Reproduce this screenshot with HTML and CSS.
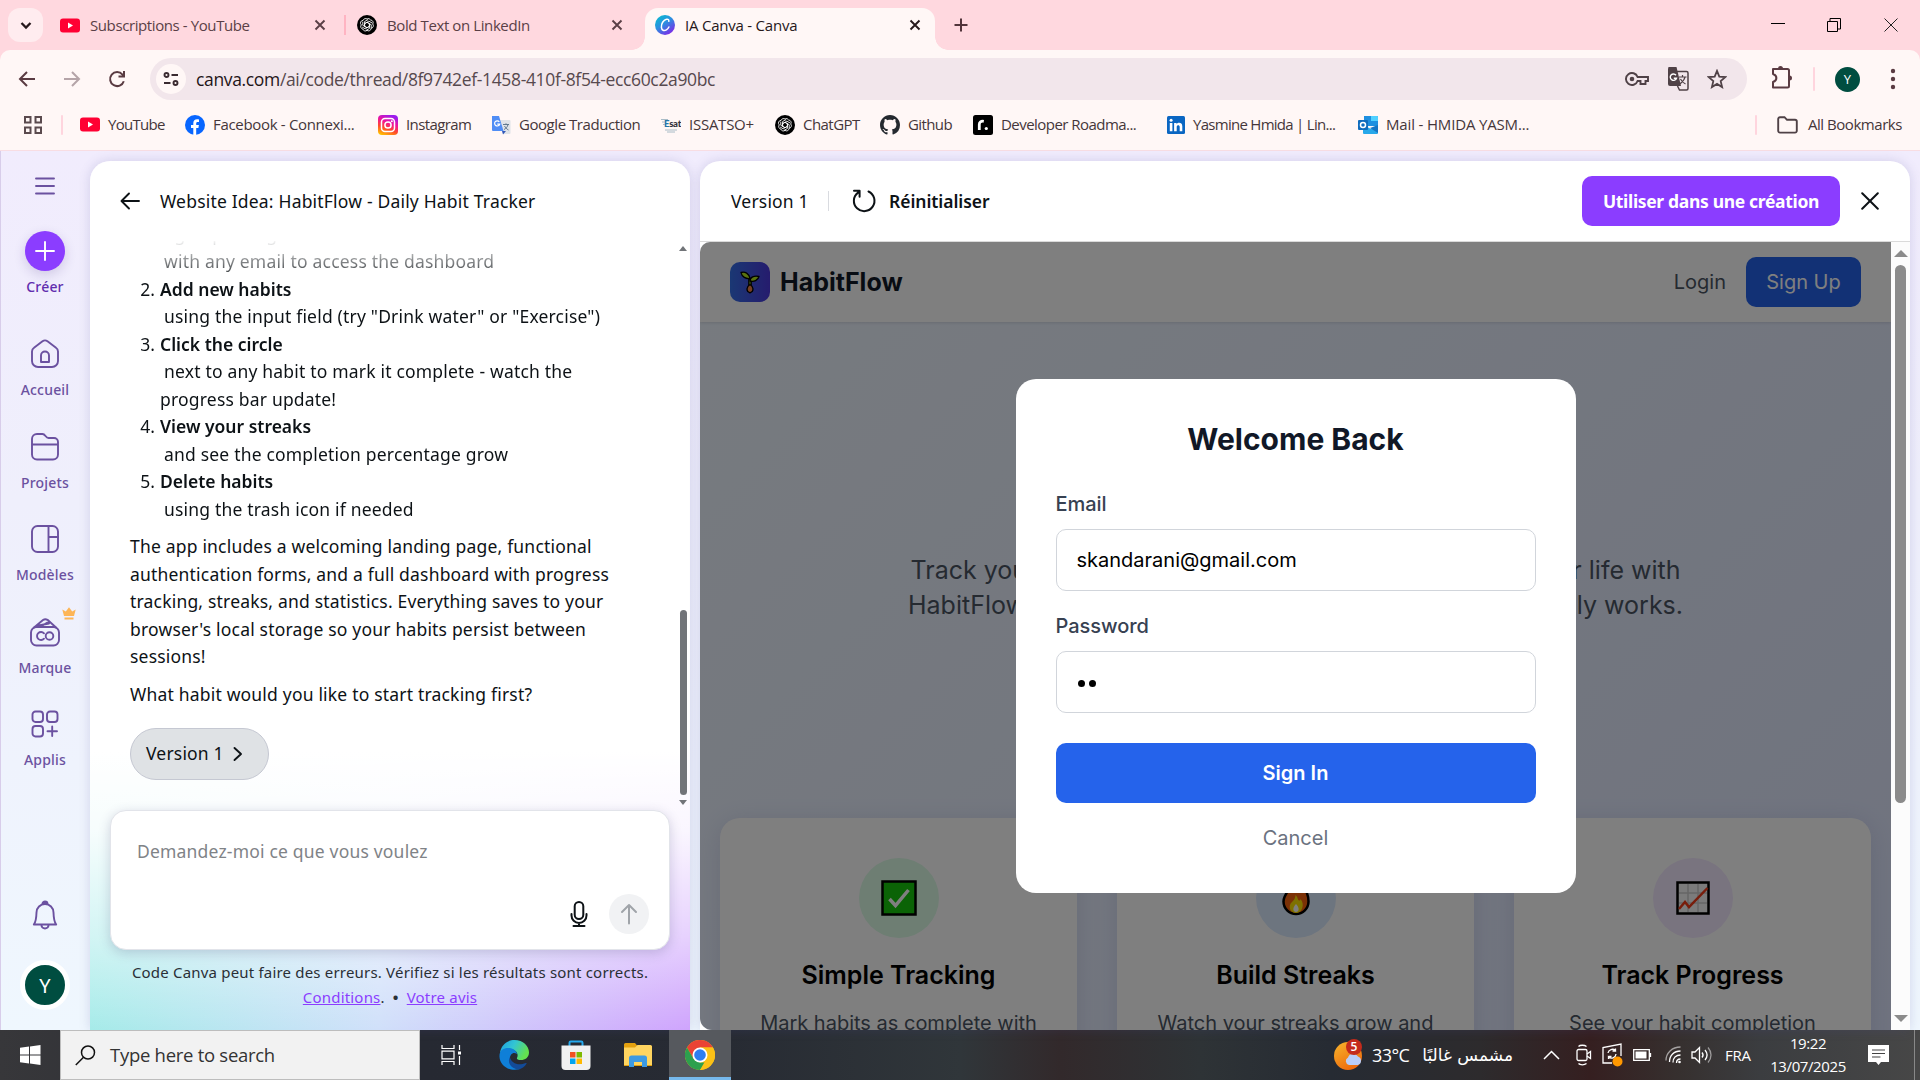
FILE: index.html
```html
<!DOCTYPE html>
<html lang="fr">
<head>
<meta charset="utf-8">
<title>IA Canva - Canva</title>
<link rel="stylesheet" href="styles.css">
</head>
<body>
<svg width="0" height="0" class="defs">
  <defs>
    <linearGradient id="gCanva" x1="0" y1="0" x2=".7" y2="1"><stop offset="0" stop-color="#00c4cc"/><stop offset=".5" stop-color="#2c8fe0"/><stop offset="1" stop-color="#7d2ae8"/></linearGradient>
    <linearGradient id="gInsta" x1=".2" y1="1" x2=".6" y2="0"><stop offset="0" stop-color="#ffc400"/><stop offset=".35" stop-color="#ff4b2b"/><stop offset=".65" stop-color="#f0149a"/><stop offset="1" stop-color="#9a1cf0"/></linearGradient>
    <linearGradient id="gEdge" x1="0" y1="0" x2="1" y2=".4"><stop offset="0" stop-color="#1b9de2"/><stop offset=".5" stop-color="#33c5d3"/><stop offset="1" stop-color="#63e04f"/></linearGradient>
    <linearGradient id="gSun" x1="0" y1="0" x2=".6" y2="1"><stop offset="0" stop-color="#f7b52c"/><stop offset="1" stop-color="#ee6a0c"/></linearGradient>
    <symbol id="yt" viewBox="0 0 20 14"><rect width="20" height="14" rx="3" fill="#ff0033"/><path d="M8 4l5 3-5 3z" fill="#fff"/></symbol>
    <symbol id="gpt" viewBox="0 0 20 20"><circle cx="10" cy="10" r="10" fill="#000"/><g fill="none" stroke="#fff" stroke-width=".9"><path d="M10 4a2.600 2.600 0 0 1 3.600 1 2.600 2.600 0 0 1 2.100 4 2.600 2.600 0 0 1-1.600 4.300 2.600 2.600 0 0 1-4.100 2.100 2.600 2.600 0 0 1-4.100-1.300 2.600 2.600 0 0 1-1.600-4.200A2.600 2.600 0 0 1 6.100 5.400 2.600 2.600 0 0 1 10 4z"/><path d="M10 7.300l2.400 1.350v2.700L10 12.700l-2.400-1.350v-2.700zM7.600 11.300V6.500L11 4.600M12.400 8.700v4.800L9 15.400M10 7.300l4.200 2.400v3.600M10 12.700l-4.200-2.400V6.700M12.400 11.300l-4.200 2.500-3-1.700M7.600 8.700l4.200-2.500 3.200 1.700"/></g></symbol>
    <symbol id="x" viewBox="0 0 12 12"><path d="M1.500 1.500l9 9m0-9l-9 9" stroke="currentColor" stroke-width="1.900" fill="none"/></symbol>
  </defs>
</svg>

<header class="browser">
  <div class="tabstrip">
    <button class="tab-search"><svg width="12" height="9" viewBox="0 0 12 9"><path d="M1.500 2L6 6.500 10.500 2" fill="none" stroke="#26181b" stroke-width="2.300"/></svg></button>
    <div class="tab tab-one"><svg width="20" height="15"><use href="#yt"/></svg><span>Subscriptions - YouTube</span><svg class="close" width="12" height="12"><use href="#x"/></svg></div>
    <div class="tab tab-two"><svg width="20" height="20"><use href="#gpt"/></svg><span>Bold Text on LinkedIn</span><svg class="close" width="12" height="12"><use href="#x"/></svg></div>
    <div class="tab active"><svg width="20" height="20" viewBox="0 0 20 20"><circle cx="10" cy="10" r="10" fill="url(#gCanva)"/><path d="M13.800 6.300c.3-1.600-.8-2.500-2.400-2-3 .8-5.400 4.400-5 8 .3 3 2.600 4 5 2.500 1.200-.7 2-1.700 2.500-2.800" fill="none" stroke="#fff" stroke-width="1.500" stroke-linecap="round"/></svg><span>IA Canva - Canva</span><svg class="close" width="12" height="12"><use href="#x"/></svg></div>
    <svg class="newtab" width="14" height="14" viewBox="0 0 14 14"><path d="M7 .5v13M.5 7h13" stroke="#52343b" stroke-width="2"/></svg>
    <div class="winctl">
      <svg width="14" height="14" viewBox="0 0 14 14"><path d="M0 5.500h14" stroke="#000"/></svg>
      <svg width="14" height="14" viewBox="0 0 14 14"><path d="M.5 3.500h10v10H.5zM3 3V.5h10.500V11H11" fill="none" stroke="#000"/></svg>
      <svg width="14" height="14" viewBox="0 0 14 14"><path d="M.5.5l13 13m0-13l-13 13" stroke="#222" fill="none"/></svg>
    </div>
  </div>
  <div class="toolbar">
    <svg class="nav-i" width="18" height="18" viewBox="0 0 18 18"><path d="M17 9H2.500M9 2L2 9l7 7" fill="none" stroke="#5a3b42" stroke-width="2"/></svg>
    <svg class="nav-i" width="18" height="18" viewBox="0 0 18 18"><path d="M1 9h14.500M9 2l7 7-7 7" fill="none" stroke="#b5a4a8" stroke-width="2"/></svg>
    <svg class="nav-i" width="18" height="18" viewBox="0 0 18 18"><path d="M15.800 11.200A7 7 0 1 1 14.500 4.600L16 6M16 1v5.500h-5.500" fill="none" stroke="#5a3b42" stroke-width="2"/></svg>
    <div class="omnibox">
      <span class="site"><svg width="16" height="16" viewBox="0 0 16 16" fill="none" stroke="#3a2a30" stroke-width="1.900"><circle cx="3.500" cy="4" r="2"/><path d="M8.500 4H15M1 12h6.500"/><circle cx="12.500" cy="12" r="2"/></svg></span>
      <span class="url"><b>canva.com</b>/ai/code/thread/8f9742ef-1458-410f-8f54-ecc60c2a90bc</span>
      <div class="omni-icons">
        <svg width="24" height="14" viewBox="0 0 24 14"><path d="M12.600 5A6 6 0 1 0 12.600 9H15.500v3h5V9H23V5z" fill="none" stroke="#4f4146" stroke-width="1.900"/><circle cx="7" cy="7" r="2.300" fill="#4f4146"/></svg>
        <svg width="22" height="24" viewBox="0 0 22 24"><path d="M1.500 0h8l4.500 19H3a2 2 0 0 1-2-2V2z" fill="#4f4146"/><path d="M10 4.500h9.500a1.500 1.500 0 0 1 1.500 1.500v15.500a1.500 1.500 0 0 1-1.500 1.500h-7L10.500 19" fill="none" stroke="#4f4146" stroke-width="1.500"/><path d="M12 10h7.500M15.500 8v2M18 10c-.6 3-2.500 5-5 7M13.500 12c1 2 3 4 5 5" fill="none" stroke="#4f4146" stroke-width="1.200"/><path d="M9 8.200a3.200 3.200 0 1 0 .5 3H6.800" fill="none" stroke="#fff" stroke-width="1.400"/></svg>
        <svg width="20" height="20" viewBox="0 0 20 20"><path d="M10 1.900l2.300 5.700 6 .5-4.600 4 1.400 6L10 14.900 4.900 18.100l1.400-6-4.600-4 6-.5z" fill="none" stroke="#4f4146" stroke-width="1.800"/></svg>
      </div>
    </div>
    <svg class="ext" width="22" height="26" viewBox="0 0 22 26"><path d="M2 5h14.500a1.500 1.500 0 0 1 1.500 1.500v15.500a1.500 1.500 0 0 1-1.500 1.500H2V18c4.500-1.500 4.500-6.500 0-8z" fill="none" stroke="#5a3b42" stroke-width="2" stroke-linejoin="round"/><path d="M7 4.500a2.500 2.500 0 0 1 5 0zM18.500 11.500a2.500 2.500 0 0 1 0 5z" fill="#5a3b42"/></svg>
    <i class="vsep sep-tool"></i>
    <span class="profile">Y</span>
    <svg class="dots" width="6" height="22" viewBox="0 0 6 22" fill="#5a3b42"><circle cx="3" cy="3" r="2.200"/><circle cx="3" cy="11" r="2.200"/><circle cx="3" cy="19" r="2.200"/></svg>
  </div>
  <nav class="bookmarks">
    <svg class="apps" width="18" height="18" viewBox="0 0 18 18" fill="none" stroke="#5a4a4e" stroke-width="2"><path d="M1 1h5.500v5.500H1zM11.500 1H17v5.500h-5.500zM1 11.500h5.500V17H1zM11.500 11.500H17V17h-5.500z"/></svg>
    <i class="vsep sep-apps"></i>
    <div class="bm b1"><svg width="20" height="15"><use href="#yt"/></svg><span>YouTube</span></div>
    <div class="bm b2"><svg width="20" height="20" viewBox="0 0 20 20"><circle cx="10" cy="10" r="10" fill="#0866ff"/><path d="M8.300 20v-7H6v-3h2.300V8.200c0-2.800 1.500-4 3.700-4 .8 0 1.500.1 2 .2V7h-1.300c-1.200 0-1.500.6-1.500 1.500V10h2.700l-.5 3h-2.200v7z" fill="#fff"/></svg><span>Facebook - Connexi...</span></div>
    <div class="bm b3"><svg width="20" height="20" viewBox="0 0 20 20"><rect width="20" height="20" rx="4" fill="url(#gInsta)"/><rect x="3.500" y="3.500" width="13" height="13" rx="3.500" fill="none" stroke="#fff" stroke-width="1.500"/><circle cx="10" cy="10" r="3.100" fill="none" stroke="#fff" stroke-width="1.500"/><circle cx="13.800" cy="6.200" r="1" fill="#fff"/></svg><span>Instagram</span></div>
    <div class="bm b4"><svg width="20" height="20" viewBox="0 0 20 20"><path d="M8 5h10.500a1 1 0 0 1 1 1v12a1 1 0 0 1-1 1H12z" fill="#dfe3e8"/><path d="M11 16h4l-3 3.500z" fill="#3257b8"/><path d="M1 1h7l4.500 15H2a1 1 0 0 1-1-1z" fill="#4f8df5"/><path d="M8.300 6.800a2.600 2.600 0 1 0 .4 2.400H6.300" fill="none" stroke="#fff" stroke-width="1.200"/><path d="M12 9.500h6M15 8.300v1.200M17 9.500c-.5 2.500-2 4-4 5M13.500 11c1 1.500 2 3 4 4" fill="none" stroke="#60798f"/></svg><span>Google Traduction</span></div>
    <div class="bm b5"><svg width="20" height="20" viewBox="0 0 20 20"><text x="3" y="12" font-family="Lato" font-weight="900" font-size="9.500" fill="#33333b" textLength="17"><tspan fill="#2475a8">E</tspan>sat</text><path d="M0 4.500h7M1 7h3M2 9.500h2M4 15h12M6 17h8" stroke="#9fb4c2" stroke-width=".9"/></svg><span>ISSATSO+</span></div>
    <div class="bm b6"><svg width="20" height="20"><use href="#gpt"/></svg><span>ChatGPT</span></div>
    <div class="bm b7"><svg width="20" height="20" viewBox="0 0 16 16"><path fill="#24292f" d="M8 0C3.580 0 0 3.580 0 8c0 3.540 2.290 6.530 5.470 7.590.4.070.55-.17.55-.38 0-.19-.01-.82-.01-1.490-2.010.37-2.530-.49-2.690-.94-.09-.23-.48-.94-.82-1.130-.28-.15-.68-.52-.01-.53.63-.01 1.080.58 1.230.82.72 1.210 1.870.87 2.330.66.070-.52.28-.87.51-1.070-1.780-.2-3.640-.89-3.640-3.950 0-.87.31-1.590.82-2.150-.08-.2-.36-1.020.08-2.120 0 0 .67-.21 2.200.82.640-.18 1.320-.27 2-.27s1.360.09 2 .27c1.530-1.040 2.200-.82 2.200-.82.44 1.100.16 1.920.08 2.120.51.56.82 1.270.82 2.150 0 3.070-1.870 3.750-3.650 3.950.29.25.54.73.54 1.480 0 1.070-.01 1.930-.01 2.200 0 .21.15.46.55.38A8.010 8.010 0 0 0 16 8c0-4.420-3.580-8-8-8z"/></svg><span>Github</span></div>
    <div class="bm b8"><svg width="20" height="20" viewBox="0 0 20 20"><rect width="20" height="20" rx="2.500"/><path d="M6.300 15V9.500C6.300 7 8 5.800 10.800 6.300" fill="none" stroke="#fff" stroke-width="2.800"/><circle cx="13.300" cy="13.500" r="1.600" fill="#fff"/></svg><span>Developer Roadma...</span></div>
    <div class="bm b9"><svg width="18" height="18" viewBox="0 0 18 18"><rect width="18" height="18" rx="1.500" fill="#0a66c2"/><path d="M2.800 7h2.600v8.300H2.800zM7.100 7h2.500v1.200c1.400-2.200 5.700-1.900 5.700 2v5.100h-2.600v-4.500c0-2.200-3-2.100-3 0v4.500H7.100z" fill="#fff"/><circle cx="4.100" cy="4.200" r="1.500" fill="#fff"/></svg><span>Yasmine Hmida | Lin...</span></div>
    <div class="bm b10"><svg width="20" height="18" viewBox="0 0 20 18"><path d="M6 0h13a1 1 0 0 1 1 1v9H6z" fill="#1e8fe0"/><path d="M13 0h6a1 1 0 0 1 1 1v4h-7z" fill="#50d0ff"/><path d="M5 9l8 4 7-4v8a1 1 0 0 1-1 1H6a1 1 0 0 1-1-1z" fill="#28a8ea"/><path d="M20 9v8l-8-5z" fill="#1474c4"/><rect y="4" width="10" height="10" rx="1" fill="#0f6cbd"/><circle cx="5" cy="9" r="2.500" fill="none" stroke="#fff" stroke-width="1.500"/></svg><span>Mail - HMIDA YASM...</span></div>
    <i class="vsep sep-all"></i>
    <div class="bm b11"><svg width="21" height="18" viewBox="0 0 21 18"><path d="M1.200 3a1.800 1.800 0 0 1 1.800-1.800h4.500l2.500 2.600h8a1.800 1.800 0 0 1 1.800 1.800V14.800a1.800 1.800 0 0 1-1.800 1.800H3a1.800 1.800 0 0 1-1.800-1.800z" fill="none" stroke="#4f4146" stroke-width="1.900"/></svg><span>All Bookmarks</span></div>
  </nav>
</header>

<main class="canva">
  <aside class="rail">
    <svg class="burger" width="20" height="18" viewBox="0 0 20 18"><path d="M1 1.500h18M1 9h18M1 16.500h18" stroke="#6b51a0" stroke-width="1.900" stroke-linecap="round"/></svg>
    <div class="item create"><span class="plus"><svg width="20" height="20" viewBox="0 0 20 20"><path d="M10 1v18M1 10h18" stroke="#fff" stroke-width="1.900" stroke-linecap="round"/></svg></span><em>Créer</em></div>
    <div class="item"><svg width="30" height="30" viewBox="0 0 30 30"><path d="M2 12.500c0-1.500.7-2.800 2-3.700l8.500-6.500c1.500-1.100 3.500-1.100 5 0L26 8.800c1.300.9 2 2.200 2 3.700V22a6 6 0 0 1-6 6H8a6 6 0 0 1-6-6z"/><path d="M11 23v-6.500a4 4 0 0 1 8 0V23z"/></svg><em>Accueil</em></div>
    <div class="item"><svg width="30" height="30" viewBox="0 0 30 30"><path d="M2 7a5 5 0 0 1 5-5h5.500c3 0 3 4 6 4H24a4 4 0 0 1 4 4v12.500a5 5 0 0 1-5 5H7a5 5 0 0 1-5-5zM2 12.500h26"/></svg><em>Projets</em></div>
    <div class="item"><svg width="30" height="30" viewBox="0 0 30 30"><rect x="2" y="2" width="26" height="26" rx="5.500"/><path d="M18.500 2v26M18.500 13H28"/></svg><em>Modèles</em></div>
    <div class="item brand"><svg width="32" height="30" viewBox="0 0 32 30"><rect x="2" y="10" width="28" height="18.500" rx="5.500"/><path d="M5 10.500l9-7.500c1.500-1 3-1 4.500-.2L27 10.500M11 10l9-5.500M7 9l13-2.500"/><path d="M15 16.300a4 4 0 1 0 0 5.400"/><circle cx="20.500" cy="19" r="3.800"/></svg><svg class="crown" width="14" height="13" viewBox="0 0 14 13"><path d="M2 9L.3 2.500l3.500 2L7 .3l3.200 4.200 3.500-2L12 9zM2.500 10.500h9V12.500h-9z" fill="#fdb556"/></svg><em>Marque</em></div>
    <div class="item"><svg width="30" height="30" viewBox="0 0 30 30"><rect x="2.500" y="2.500" width="10.500" height="10.500" rx="3"/><rect x="17" y="2.500" width="10.500" height="10.500" rx="3"/><rect x="2.500" y="17" width="10.500" height="10.500" rx="3"/><path d="M22.200 17.500v9.500M17.500 22.200H27"/></svg><em>Applis</em></div>
    <div class="spacer"></div>
    <svg class="bell" width="28" height="30" viewBox="0 0 28 30"><path d="M2.800 24.500c2-2.500 2.500-5 2.700-12A8.500 8.500 0 0 1 14 4a8.500 8.500 0 0 1 8.500 8.500c.2 7 .7 9.500 2.700 12zM10.500 25.500a3.500 3 0 0 0 7 0"/><path d="M11.500 4a2.500 2.500 0 0 1 5 0" fill="#6b51a0"/></svg>
    <span class="me">Y</span>
  </aside>

  <section class="chat">
    <div class="chat-head"><svg width="20" height="18" viewBox="0 0 20 18"><path d="M19 9H2M9 1.500L1.500 9 9 16.500" fill="none" stroke="#0d1216" stroke-width="1.900" stroke-linecap="round" stroke-linejoin="round"/></svg><span>Website Idea: HabitFlow - Daily Habit Tracker</span></div>
    <div class="chat-scroll">
      <div class="msg">
        <ol>
          <li class="cut">Sign up or log in</li>
          <li class="cut"><p>with any email to access the dashboard</p></li>
          <li value="2"><b>Add new habits</b><p>using the input field (try "Drink water" or "Exercise")</p></li>
          <li><b>Click the circle</b><p>next to any habit to mark it complete - watch the</p><p class="flush">progress bar update!</p></li>
          <li><b>View your streaks</b><p>and see the completion percentage grow</p></li>
          <li><b>Delete habits</b><p>using the trash icon if needed</p></li>
        </ol>
        <p class="para">The app includes a welcoming landing page, functional<br>authentication forms, and a full dashboard with progress<br>tracking, streaks, and statistics. Everything saves to your<br>browser's local storage so your habits persist between<br>sessions!</p>
        <p class="para">What habit would you like to start tracking first?</p>
        <button class="pill"><span>Version 1</span><svg width="10" height="16" viewBox="0 0 10 16"><path d="M1.500 2l6.500 6-6.500 6" fill="none" stroke="#0d1216" stroke-width="1.900" stroke-linecap="round" stroke-linejoin="round"/></svg></button>
      </div>
      <div class="bar"><i class="up"></i><i class="thumb"></i><i class="down"></i></div>
    </div>
    <div class="composer">
      <span>Demandez-moi ce que vous voulez</span>
      <div class="tools">
        <svg width="20" height="28" viewBox="0 0 20 28"><rect x="5.700" y="2" width="8.600" height="17" rx="4.300"/><path d="M2.500 14v1.500a7.500 7.500 0 0 0 15 0V14M10 23v3M4.500 26h11"/></svg>
        <i class="send"><svg width="18" height="22" viewBox="0 0 18 22"><path d="M9 20.500V2M2 9l7-7 7 7"/></svg></i>
      </div>
    </div>
    <p class="note"><span>Code Canva peut faire des erreurs. Vérifiez si les résultats sont corrects.</span><br><a>Conditions</a>. <b>•</b> <a>Votre avis</a></p>
  </section>

  <section class="preview">
    <div class="pv-head">
      <span class="ver">Version 1</span><i class="line"></i>
      <svg width="26" height="26" viewBox="0 0 26 26"><path d="M17.500 3.500A10.300 10.300 0 1 1 7 4.600M3 2.800h5.600v6" fill="none" stroke="#0d1216" stroke-width="2" stroke-linecap="round" stroke-linejoin="round"/></svg>
      <b class="reset">Réinitialiser</b>
      <button class="use"><span>Utiliser dans une création</span></button>
      <svg class="pv-x" width="18" height="18" viewBox="0 0 18 18"><path d="M1.200 1.200l15.600 15.600m0-15.600L1.200 16.800" stroke="#0d1216" stroke-width="2" stroke-linecap="round"/></svg>
    </div>
    <div class="frame">
      <div class="app">
        <nav class="app-nav">
          <span class="logo"><svg width="20" height="24" viewBox="0 0 20 24" stroke="#000" stroke-width="1.300" stroke-linejoin="round"><path d="M8.800 9h2.400v7H8.800z" fill="#86c81c"/><path d="M10 8.500C9 3 5 1.500 1 2.500c.8 4.500 5 6.500 9 6zM10 11c0-4 4-5.500 9-4.500-1 4-5 5.500-9 4.500z" fill="#b4e61e"/><path d="M10 14.500c3.500 2 4.500 7 0 8.300-4.500-1.300-3.500-6.300 0-8.300z" fill="#f08040"/></svg></span>
          <span class="name">HabitFlow</span>
          <span class="login">Login</span><span class="signup">Sign Up</span>
        </nav>
        <div class="hero">
          <p class="l1"><span>Track your daily</span><span>your life with</span></p>
          <p class="l2"><span>HabitFlow, the</span><span>that really works.</span></p>
        </div>
        <div class="cards">
          <article><span class="disc green"><svg width="36" height="36" viewBox="0 0 36 36"><rect x="1.500" y="1.500" width="33" height="33" fill="#16c60c" stroke="#000" stroke-width="2.500"/><path d="M8.500 19l6 6.500L27.500 10" fill="none" stroke="#fff" stroke-width="3.500"/></svg></span><h3>Simple Tracking</h3><p>Mark habits as complete with</p></article>
          <article><span class="disc blue"><svg width="28" height="36" viewBox="0 0 28 36"><path d="M11 1.500c5 3 4 7 7 8 2 .5 3-1 3-3 5 6 5.500 10 5.500 15a12.500 12.500 0 0 1-25 0c0-8 8-12 9.500-20z" fill="#f7630c" stroke="#000" stroke-width="2.500"/><path d="M13.500 15c3 3 2 5 3.500 5.500 1 .4 1.500-.5 1.500-1.500 5 6 1 14-4.500 14-6 0-8.500-7-4-11 2-2 3.500-4 3.500-7z" fill="#fde300"/><path d="M14 24c4 4 3 8 0 8s-4-4 0-8z" fill="#fff"/></svg></span><h3>Build Streaks</h3><p>Watch your streaks grow and</p></article>
          <article><span class="disc violet"><svg width="34" height="34" viewBox="0 0 34 34"><rect x="1.500" y="1.500" width="31" height="31" fill="#f6f6f6" stroke="#000" stroke-width="2.500"/><path d="M12 3v28M22 3v28M3 12h28M3 22h28" stroke="#ccc" stroke-width="1.500"/><path d="M3 28l6-7 4 5L31.500 7" fill="none" stroke="#f03a17" stroke-width="2.500"/></svg></span><h3>Track Progress</h3><p>See your habit completion</p></article>
        </div>
        <div class="shade">
          <form class="modal">
            <h2>Welcome Back</h2>
            <label>Email</label>
            <div class="field">skandarani@gmail.com</div>
            <label>Password</label>
            <div class="field"><i class="dot"></i><i class="dot"></i></div>
            <div class="signin">Sign In</div>
            <div class="cancel">Cancel</div>
          </form>
        </div>
      </div>
      <div class="sb"><i class="up"></i><i class="thumb"></i><i class="fill"></i><i class="down"></i></div>
    </div>
  </section>
</main>

<footer class="taskbar">
  <span class="start"><svg width="21" height="20" viewBox="0 0 21 20" fill="#fff"><path d="M0 2.800l9-1.200v8H0zM10 1.500L20.500 0v9.600H10zM0 10.500h9v8L0 17.200zM10 10.500h10.500V20L10 18.600z"/></svg></span>
  <div class="search"><svg width="21" height="21" viewBox="0 0 21 21"><circle cx="13" cy="7.500" r="6.500" fill="none" stroke="#111" stroke-width="1.500"/><path d="M8.500 12.300L.8 20" stroke="#111" stroke-width="1.500"/></svg><span>Type here to search</span></div>
  <div class="pins">
    <span><svg width="21" height="20" viewBox="0 0 21 20" fill="none" stroke="#fff" stroke-width="1.200"><path d="M1 0v3.500h12V0M1 20v-3.500h12V20M1 6.200h12v7.600H1zM18.500 0v5M18.500 11v9"/><path d="M17 6.500h3v3h-3z" fill="#fff" stroke="none"/></svg></span>
    <span><svg width="30" height="30" viewBox="0 0 30 30"><path d="M1 13C2 5 8 0 15.500 0 24 0 30 6 30 12.500c0 5-4 7.500-8 7.500-3.500 0-4.500-1-4-2 1-1.500 1-5-1.500-7C13 8 5 8 1 13z" fill="url(#gEdge)"/><path d="M.5 17C0 9 6 7.500 10.500 8c4 .4 7 3 7.500 6-4-3-7.500 1-7 5 .6 5 5.500 8.500 10 10C9 32 1 25 .5 17z" fill="#0f7fd8"/><path d="M11 17c.5 5 6.500 8 11 7.200 3-.4 4.500-1.700 5.500-1.200.8.500-3 5.500-8 6.500C13 29 7.500 23 11 17z" fill="#134b98"/></svg></span>
    <span><svg width="30" height="30" viewBox="0 0 30 30"><path d="M8.500 7V2.800A1.300 1.300 0 0 1 9.800 1.500h10.400a1.300 1.300 0 0 1 1.300 1.300V7" fill="none" stroke="#25a9ee" stroke-width="2"/><path d="M.5 5.500h29V26a4 4 0 0 1-4 4h-21a4 4 0 0 1-4-4z" fill="#f1f1f1"/><path d="M9 12h5.500v5.500H9z" fill="#f25022"/><path d="M15.500 12H21v5.500h-5.500z" fill="#7fba00"/><path d="M9 18.500h5.500V24H9z" fill="#00a4ef"/><path d="M15.500 18.500H21V24h-5.500z" fill="#ffb900"/></svg></span>
    <span><svg width="28" height="24" viewBox="0 0 28 24"><path d="M0 1.500A1.500 1.500 0 0 1 1.500 0H11l2.500 3H28v20H0z" fill="#e4a10f"/><path d="M0 4.500h11L13.500 2H26.500A1.500 1.500 0 0 1 28 3.500V22H0z" fill="#ffd560"/><path d="M5 24v-9a2.500 2.500 0 0 1 2.500-2.500h13A2.500 2.500 0 0 1 23 15v9h-5v-5h-8v5z" fill="#3d9ae2"/></svg></span>
    <span class="on"><svg width="30" height="30" viewBox="0 0 30 30"><circle cx="15" cy="15" r="15" fill="#fbc116"/><path d="M2 7.500A15 15 0 0 1 28 7.500H15L8.500 18.800z" fill="#ea4335"/><path d="M2 7.500L8.500 18.700 15 22.500h6.500L15 30A15 15 0 0 1 2 7.500z" fill="#2da04e"/><path d="M15 7.500h13A15 15 0 0 1 15 30l6.500-11.300z" fill="#fbc116"/><circle cx="15" cy="15" r="7.500" fill="#fff"/><circle cx="15" cy="15" r="5.800" fill="#2d7df0"/></svg></span>
  </div>
  <div class="tray">
    <svg class="weather" width="30" height="34" viewBox="0 0 30 34"><circle cx="14" cy="18" r="14" fill="url(#gSun)"/><path d="M15 27a4 4 0 0 1-1-7.500 5.500 5.500 0 0 1 10-1A4.500 4.500 0 0 1 24 27z" fill="#b9cdf8"/><circle cx="20" cy="9" r="8" fill="#c42b1c"/><text x="20" y="13" text-anchor="middle" font-family="Open Sans" font-size="12" font-weight="600" fill="#fff">5</text></svg>
    <span class="deg">33°C</span><span class="ar" dir="rtl" lang="ar">مشمس غالبًا</span>
    <svg class="i1" width="17" height="10" viewBox="0 0 17 10"><path d="M1 9l7.500-7.500L16 9" fill="none" stroke="#fff" stroke-width="1.500"/></svg>
    <svg class="i2" width="16" height="22" viewBox="0 0 16 22" fill="none" stroke="#fff" stroke-width="1.300"><rect x="1" y="5.500" width="10" height="11" rx="1.500"/><path d="M11 10l3.500-2.500v7L11 12M2.500 2.500C4 .8 8.500.8 10.500 2.500M2.500 19.500c1.500 1.700 6 1.700 8 0"/></svg>
    <svg class="i3" width="21" height="24" viewBox="0 0 21 24" fill="none" stroke="#fff" stroke-width="1.300"><path d="M10 20H1V4.500L19 1v12M6 10a4.500 4.500 0 0 1 7.500-2.500V5.500M13.500 8h-3M14 11a4.500 4.500 0 0 1-7.500 3v2M6.500 13.500h3"/><circle cx="15.500" cy="18.500" r="5" fill="#ff9800" stroke="none"/></svg>
    <svg class="i4" width="19" height="12" viewBox="0 0 19 12"><path d="M.7.7h15.600v10.600H.7zM17.500 4v4" fill="none" stroke="#fff" stroke-width="1.300"/><path d="M2.500 2.500h11v7h-11z" fill="#fff"/></svg>
    <svg class="i5" width="17" height="18" viewBox="0 0 17 18" fill="none" stroke="#fff" stroke-width="1.300"><path d="M1 14.500C1 7 7 1 15.500 1" opacity=".55"/><path d="M4.500 16C4.500 9.500 9 5 15.500 5M8 16.500c0-4.500 3-7.500 7.500-7.500M11.500 17c0-2.500 1.500-4 4-4"/><circle cx="14.500" cy="16" r="1.300" fill="#fff" stroke="none"/></svg>
    <svg class="i6" width="21" height="20" viewBox="0 0 21 20" fill="none" stroke="#fff" stroke-width="1.300"><path d="M1 7h3l4.500-4.500v15L4 13H1zM11 7.500c1.300 1.500 1.300 3.500 0 5M14 5c2.500 3 2.500 7 0 10"/><path d="M17 2.500c4 4.500 4 10.500 0 15" opacity=".5"/></svg>
    <span class="lang">FRA</span>
    <div class="clock"><span>19:22</span><span class="date">13/07/2025</span></div>
    <svg class="i7" width="21" height="20" viewBox="0 0 21 20"><path d="M0 0h21v17h-8l-2.500 3L8 17H0z" fill="#fff"/><path d="M4 5h13M4 8.500h13M4 12h8.500" stroke="#444" stroke-width="1.200"/></svg>
    <i class="desk"></i>
  </div>
</footer>
</body>
</html>
```
FILE: styles.css
```css
* { box-sizing: border-box; margin: 0; padding: 0; }
body { width: 1920px; height: 1080px; overflow: hidden; font-family: "Open Sans", sans-serif; }
svg { display: block; flex: none; }
button { border: 0; font: inherit; letter-spacing: inherit; }
.defs { position: absolute; }
span, em, b { white-space: nowrap; }

/* browser chrome */
.browser { height: 151px; background: linear-gradient(#ffd8df 70px, #fff7f6 70px); border-bottom: 1px solid #f8dde3; color: #45363a; }
.tabstrip { height: 50px; background: #ffd8df; display: flex; align-items: center; padding-left: 8px; font-size: 15px; letter-spacing: -.4px; }
.tab-search { width: 35px; height: 34px; border-radius: 12px; background: #ffecef; display: grid; place-items: center; }
.tab { display: flex; align-items: center; height: 34px; color: #5a3f46; }
.tab span { margin-left: 10px; }
.tab .close { margin-left: auto; }
.tab-one { margin-left: 17px; width: 286px; padding-right: 18px; border-right: 2px solid #ffb4c2; height: 20px; }
.tab-two { margin-left: 11px; width: 266px; }
.active { margin-left: 22px; width: 290px; height: 42px; margin-top: 8px; padding: 0 14px 8px 10px; background: #fff7f6; border-radius: 13px 13px 0 0; color: #26181b; position: relative; letter-spacing: -.22px; }
.active::before, .active::after { content: ""; position: absolute; bottom: 0; width: 13px; height: 13px; }
.active::before { left: -13px; background: radial-gradient(circle at 0 0, #ffd8df 12.5px, #fff7f6 13px); }
.active::after { right: -13px; background: radial-gradient(circle at 100% 0, #ffd8df 12.5px, #fff7f6 13px); }
.newtab { margin-left: 19px; }
.winctl { margin-left: auto; display: flex; gap: 42px; padding-right: 22px; }
.winctl svg:last-child { margin-left: 1px; }
.toolbar { height: 56px; display: flex; align-items: center; padding: 2px 0 0 18px; border-radius: 10px 10px 0 0; background: #fff7f6; }
.nav-i { margin-right: 27px; }
.nav-i + .omnibox { margin-left: -3px; }
.omnibox { width: 1597px; height: 42px; border-radius: 21px; background: #f2e6eb; display: flex; align-items: center; padding-left: 6px; }
.site { width: 30px; height: 30px; border-radius: 50%; background: #fff7f6; display: grid; place-items: center; }
.url { margin-left: 10px; font-size: 17.500px; color: #57494e; letter-spacing: -.35px; }
.url b { font-weight: 400; color: #1f1518; }
.omni-icons { margin-left: auto; display: flex; align-items: center; gap: 18px; padding-right: 20px; }
.ext { margin-left: 24px; margin-top: -4px; }
.vsep { width: 2px; height: 24px; background: #ffd5de; border-radius: 1px; flex: none; }
.sep-tool { margin-left: 20px; }
.profile { margin-left: 20px; width: 25px; height: 25px; border-radius: 50%; background: #004d40; color: #fff; font-size: 13px; display: grid; place-items: center; }
.dots { margin-left: 30px; }
.bookmarks { height: 44px; display: flex; align-items: center; padding: 0 18px 7px 24px; font-size: 15px; background: #fff7f6; letter-spacing: -.45px; }
.sep-apps { margin: 0 17px 0 19px; height: 20px; }
.bm { display: flex; align-items: center; gap: 8px; }
.bm span { margin-top: -1px; }
.b1 { width: 105px; letter-spacing: -.7px; }
.b2 { width: 193px; letter-spacing: -.32px; }
.b3 { width: 113px; letter-spacing: -.6px; }
.b4 { width: 170px; }
.b5 { width: 114px; letter-spacing: -.25px; }
.b6 { width: 105px; letter-spacing: -.55px; }
.b7 { width: 93px; letter-spacing: -.6px; }
.b8 { width: 194px; letter-spacing: -.54px; }
.b9 { width: 191px; letter-spacing: -.72px; }
.b10 { letter-spacing: -.16px; }
.sep-all { margin-left: auto; margin-right: 20px; height: 20px; }
.b11 { gap: 10px; }

/* canva shell */
.canva { height: 879px; display: flex; background: linear-gradient(#f1ecfd, #efeffc 40%, #eff7fe); font-family: "Noto Sans", sans-serif; color: #0d1216; font-size: 17.500px; letter-spacing: .19px; }
.rail { width: 90px; display: flex; flex-direction: column; align-items: center; padding-top: 26px; box-shadow: inset 1px 0 #d8cdea; }
.rail em { font-style: normal; font-size: 14px; font-weight: 500; color: #6b51a0; line-height: 20px; }
.burger { margin-bottom: 36px; }
.item { display: flex; flex-direction: column; align-items: center; height: 92.500px; gap: 11px; position: relative; }
.item > svg, .bell { fill: none; stroke: #6b51a0; stroke-width: 1.900; stroke-linejoin: round; stroke-linecap: round; }
.item .crown { position: absolute; right: -4px; top: -10px; stroke: none; }
.create { height: 108px; gap: 6px; }
.create em { color: #612dae; }
.plus { width: 40px; height: 40px; border-radius: 50%; background: #8b3dff; display: grid; place-items: center; box-shadow: 0 4px 12px rgba(60,40,120,.18); }
.spacer { flex: 1; }
.bell { margin-bottom: 30px; }
.me { width: 50px; height: 50px; border: 5px solid #fff; border-radius: 50%; background: #004d40; color: #fff; font-size: 20px; display: grid; place-items: center; margin-bottom: 20px; }

.chat { width: 600px; margin-top: 10px; border-radius: 20px 20px 0 0; box-shadow: 0 0 12px rgba(80,80,150,.2); display: flex; flex-direction: column;
  background: linear-gradient(#fff 590px, rgba(255,255,255,.9) 670px, rgba(255,255,255,.5) 775px, rgba(255,255,255,0) 869px), linear-gradient(90deg, #a6ebe9, #d0e0fa 48%, #cfa4fd); }
.chat-head { height: 79px; display: flex; align-items: center; gap: 20px; padding-left: 30px; }
.chat-scroll { height: 570px; display: flex; justify-content: space-between; padding-top: 1px; }
.msg { padding-left: 40px; line-height: 27.500px; overflow: hidden; }
.msg ol { padding-left: 30px; margin-top: -20.500px; -webkit-mask-image: linear-gradient(transparent 18px, #000 62px); mask-image: linear-gradient(transparent 18px, #000 62px); }
.msg li b { font-weight: 600; letter-spacing: 0; }
.msg li p { padding-left: 4px; }
.msg li p.flush { padding-left: 0; }
.cut { list-style: none; }
.para { margin-top: 10px; }
.pill { display: flex; align-items: center; gap: 9px; width: 139px; height: 52px; margin-top: 20px; padding: 0 0 1px 15px; border: 1px solid #c5c8d2; border-radius: 26px; background: #dfe2e5; color: #0d1216; }
.bar { display: flex; flex-direction: column; align-items: center; width: 14px; padding-top: 5px; }
.up { border: 7px solid transparent; border-top: 0; border-bottom: 6px solid #717478; width: 0; }
.down { border: 7px solid transparent; border-bottom: 0; border-top: 6px solid #717478; width: 0; }
.bar .up, .bar .down { border-left-width: 4.500px; border-right-width: 4.500px; }
.bar .up { border-bottom-width: 5px; }
.bar .down { border-top-width: 5px; }
.bar .thumb { width: 7px; height: 185px; border-radius: 4px; background: #717478; margin: 359px 0 5px; flex: none; }
.composer { width: 560px; height: 140px; margin-left: 20px; border-radius: 16px; background: #fff; border: 1px solid #e2e4ea; box-shadow: 0 3px 12px rgba(60,60,110,.22); padding: 28px 20px 15px 26px; display: flex; flex-direction: column; justify-content: space-between; color: #7f8387; flex: none; }
.tools { display: flex; justify-content: flex-end; align-items: center; gap: 20px; }
.tools > svg { fill: none; stroke: #0d1216; stroke-width: 2; stroke-linecap: round; }
.send { width: 40px; height: 40px; border-radius: 50%; background: #f1f2f4; display: grid; place-items: center; }
.send svg { fill: none; stroke: #a0a4a9; stroke-width: 2; stroke-linecap: round; stroke-linejoin: round; }
.note { text-align: center; font-size: 15px; line-height: 25px; margin-top: 10px; color: #2a2f36; }
.note a { color: #8b3dff; text-decoration: underline; }
.note b { margin: 0 4px; }

.preview { width: 1210px; margin: 10px 0 0 10px; border-radius: 20px 20px 0 0; background: #fff; box-shadow: 0 0 12px rgba(80,80,150,.2); }
.pv-head { height: 81px; border-bottom: 1px solid #dadada; display: flex; align-items: center; padding: 0 31px 0 31px; }
.line { width: 1px; height: 20px; background: #d9dbe0; margin: 0 22px 0 20px; }
.ver { width: 77px; margin-top: -1px; }
.reset { margin: -1px 0 0 12px; font-weight: 600; letter-spacing: -.05px; }
.use { margin-left: auto; width: 258px; height: 50px; border-radius: 10px; background: #8b3dff; color: #fff; font-weight: 700; letter-spacing: -.33px; display: grid; place-items: center; padding-bottom: 1px; }
.pv-x { margin-left: 21px; }
.frame { height: 788px; display: flex; letter-spacing: 0; }
.app { width: 1191px; position: relative; overflow: hidden; border-radius: 10px 0 0 12px; background: linear-gradient(135deg, #eff6ff, #e0e7ff); font-family: Inter, sans-serif; font-size: 20px; }
.app-nav { height: 80px; background: #fff; display: flex; align-items: center; padding: 0 30px; box-shadow: 0 1px 3px rgba(0,0,0,.12); }
.logo { width: 40px; height: 40px; border-radius: 10px; background: linear-gradient(90deg, #3570e8, #4b38dc); display: grid; place-items: center; }
.name { font-size: 25px; font-weight: 700; color: #111827; margin-left: 10px; }
.login { margin-left: auto; color: #4b5563; margin-right: 20px; }
.signup { width: 115px; height: 50px; border-radius: 10px; background: #2563eb; color: #fff; display: grid; place-items: center; }
.hero { height: 496px; padding-top: 231px; font-size: 25px; line-height: 35px; color: #4b5563; }
.hero p { display: flex; justify-content: space-between; margin: 0 auto; }
.l1 { width: 770px; }
.l2 { width: 775px; }
.cards { display: flex; gap: 40px; padding: 0 20px; }
.cards article { flex: 1; height: 340px; background: #fff; border-radius: 20px; box-shadow: 0 4px 24px rgba(80,90,140,.16); display: flex; flex-direction: column; align-items: center; padding-top: 40px; }
.disc { width: 80px; height: 80px; border-radius: 50%; display: grid; place-items: center; flex: none; }
.green { background: #dcfce7; }
.blue { background: #dbeafe; }
.violet { background: #f3e8ff; }
.cards h3 { font-size: 25px; font-weight: 600; line-height: 35px; color: #000; margin: 20px 0 15px; white-space: nowrap; }
.cards p { line-height: 30px; color: #4b5563; white-space: nowrap; }
.shade { position: absolute; inset: 0; background: rgba(0,0,0,.5); display: flex; justify-content: center; align-items: flex-start; padding-top: 137px; }
.modal { width: 560px; height: 514px; background: #fff; border-radius: 20px; padding: 40px; }
.modal h2 { font-size: 30px; font-weight: 700; line-height: 40px; text-align: center; color: #111827; }
.modal label { display: block; line-height: 30px; margin-top: 30px; margin-bottom: 10px; color: #374151; font-weight: 500; letter-spacing: -.05px; }
.modal .field + label { margin-top: 20px; }
.field { height: 62px; border: 1px solid #d1d5db; border-radius: 10px; display: flex; align-items: center; padding-left: 20px; color: #000; }
.dot { width: 7px; height: 7px; border-radius: 50%; background: #000; margin: 2px 2px 0; }
.dot:first-child { margin-left: 1px; }
.dot + .dot { margin-left: 2px; }
.signin { height: 60px; margin-top: 30px; border-radius: 10px; background: #2563eb; color: #fff; font-weight: 600; display: grid; place-items: center; }
.cancel { margin-top: 20px; line-height: 30px; text-align: center; color: #6b7280; }
.sb { width: 19px; background: #fcfcfc; display: flex; flex-direction: column; align-items: center; padding-top: 8px; }
.sb .up { border-bottom-color: #8b8b8b; border-bottom-width: 7px; }
.sb .down { border-top-color: #8b8b8b; border-top-width: 7px; margin-bottom: 8px; }
.sb .thumb { width: 11px; height: 538px; border-radius: 6px; background: #8b8b8b; margin-top: 8px; }
.sb .fill { flex: 1; }

/* taskbar */
.taskbar { height: 50px; display: flex; color: #fff; background: linear-gradient(90deg, #37373a 0, #262932 420px, #272b33 730px, #30363a 960px, #32292b 1060px, #2e3336 1200px, #262b33 1330px, #2d2b2d 1480px, #351f20 1590px, #36302f 1680px, #3b3d40 1760px, #474747); }
.start { width: 60px; display: grid; place-items: center; }
.search { width: 360px; background: #f2f2f2; border: 1px solid #bdbdbd; display: flex; align-items: center; gap: 14px; padding-left: 14px; color: #333; font-size: 18.500px; letter-spacing: -.28px; }
.search span { margin-top: -2px; }
.pins { display: flex; }
.pins span { width: 62px; display: grid; place-items: center; }
.pins span:nth-child(2) { margin-left: 1px; }
.pins .on { background: #56595e; border-bottom: 3px solid #76b9ed; padding-top: 3px; }
.tray { margin-left: auto; display: flex; align-items: center; font-size: 18px; height: 50px; }
.deg { margin-left: 8px; width: 38px; letter-spacing: -.6px; }
.ar { width: 94px; margin-left: 9px; font-family: "DejaVu Sans", sans-serif; font-size: 17px; }
.i1 { margin-left: 30px; }
.i2 { margin-left: 16px; }
.i3 { margin-left: 10px; }
.i4 { margin-left: 10px; }
.i5 { margin-left: 13px; }
.i6 { margin-left: 9px; }
.lang { margin-left: 13px; font-size: 15px; width: 27px; letter-spacing: -.2px; }
.clock { width: 86px; margin-left: 13px; display: flex; flex-direction: column; align-items: center; font-size: 15px; line-height: 23px; letter-spacing: -.4px; }
.i7 { margin-left: 17px; }
.desk { width: 6px; height: 50px; border-left: 1px solid #888; margin-left: 25px; }
```
